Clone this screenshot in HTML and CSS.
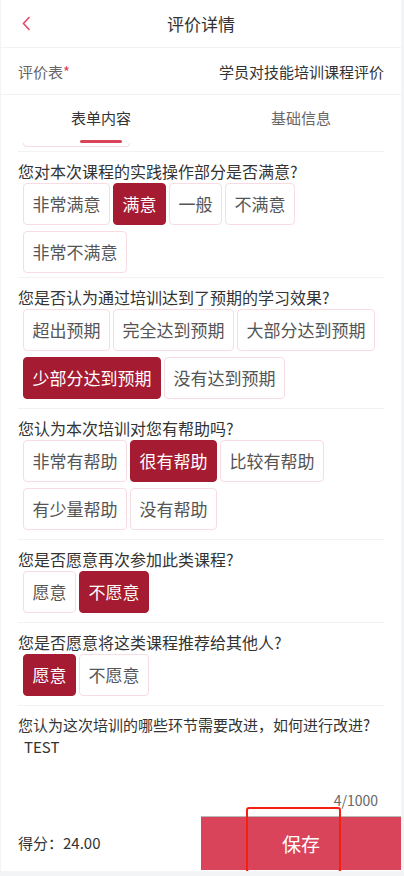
FILE: index.html
```html
<!DOCTYPE html>
<html lang="zh-CN">
<head>
    <meta charset="UTF-8">
    <meta name="viewport" content="width=device-width, initial-scale=1.0">
    <title>评价详情</title>
    <link rel="stylesheet" href="styles.css">
</head>
<body>
    <div class="app">
        <header class="nav">
            <span class="nav-back">
                <svg width="9" height="15" viewBox="0 0 9 15"><polyline points="7.5,1 1.5,7.5 7.5,14" fill="none" stroke="#e34968" stroke-width="1.6"/></svg>
            </span>
            <h1 class="nav-title">评价详情</h1>
            <span></span>
        </header>

        <div class="field-row">
            <span class="field-label">评价表<em>*</em></span>
            <span class="field-value">学员对技能培训课程评价</span>
        </div>

        <div class="tabs">
            <div class="tab active"><span>表单内容</span><i class="tab-bar"></i></div>
            <div class="tab"><span>基础信息</span></div>
        </div>

        <div class="form">
            <div class="peek"><div class="peek-btn"></div></div>

            <div class="question tight">
                <p class="q-title">您对本次课程的实践操作部分是否满意?</p>
                <div class="options">
                    <span class="opt">非常满意</span>
                    <span class="opt on">满意</span>
                    <span class="opt">一般</span>
                    <span class="opt">不满意</span>
                    <span class="opt">非常不满意</span>
                </div>
            </div>

            <div class="question">
                <p class="q-title">您是否认为通过培训达到了预期的学习效果?</p>
                <div class="options">
                    <span class="opt">超出预期</span>
                    <span class="opt">完全达到预期</span>
                    <span class="opt">大部分达到预期</span>
                    <span class="opt on">少部分达到预期</span>
                    <span class="opt">没有达到预期</span>
                </div>
            </div>

            <div class="question">
                <p class="q-title">您认为本次培训对您有帮助吗?</p>
                <div class="options">
                    <span class="opt">非常有帮助</span>
                    <span class="opt on">很有帮助</span>
                    <span class="opt">比较有帮助</span>
                    <span class="opt">有少量帮助</span>
                    <span class="opt">没有帮助</span>
                </div>
            </div>

            <div class="question">
                <p class="q-title">您是否愿意再次参加此类课程?</p>
                <div class="options">
                    <span class="opt">愿意</span>
                    <span class="opt on">不愿意</span>
                </div>
            </div>

            <div class="question">
                <p class="q-title">您是否愿意将这类课程推荐给其他人?</p>
                <div class="options">
                    <span class="opt on">愿意</span>
                    <span class="opt">不愿意</span>
                </div>
            </div>

            <div class="question text-q">
                <p class="q-title small">您认为这次培训的哪些环节需要改进，如何进行改进?</p>
                <div class="answer">TEST</div>
                <div class="counter">4/1000</div>
            </div>
        </div>

        <footer class="bar">
            <div class="score">得分：24.00</div>
            <button class="save">保存</button>
        </footer>

        <div class="mark"></div>
    </div>
</body>
</html>
```

FILE: styles.css
```css
body {
    margin: 0;
    background: #f3f4f6;
    font-family: "Noto Sans CJK SC", "Noto Sans", sans-serif;
    color: #333;
}
.app {
    position: relative;
    width: 400px;
    margin-left: 1px;
    background: #fff;
}
.nav {
    height: 47px;
    border-bottom: 1px solid #f2f2f2;
    display: grid;
    grid-template-columns: 1fr auto 1fr;
    align-items: center;
}
.nav-back {
    padding-left: 21px;
    display: flex;
    align-items: center;
}
.nav-title {
    margin: 0;
    font-size: 17px;
    font-weight: normal;
    line-height: 24px;
    color: #333;
}
.field-row {
    height: 46px;
    padding: 0 17px;
    border-bottom: 1px solid #f2f2f2;
    display: flex;
    align-items: center;
    justify-content: space-between;
    font-size: 15px;
}
.field-label {
    color: #666;
}
.field-label em {
    font-style: normal;
    color: #e0435a;
}
.field-value {
    color: #333;
}
.tabs {
    display: flex;
    height: 48px;
}
.tab {
    flex: 1;
    display: flex;
    flex-direction: column;
    align-items: center;
    padding-top: 12px;
    font-size: 15px;
    line-height: 22px;
    color: #666;
}
.tab.active {
    color: #333;
}
.tab-bar {
    width: 42px;
    height: 3px;
    margin-top: 11px;
    border-radius: 2px;
    background: #d9445a;
}
.form {
    padding: 0 17px;
}
.peek {
    height: 8px;
    border-bottom: 1px solid #f2f2f2;
}
.peek-btn {
    width: 105px;
    height: 3px;
    margin-left: 5px;
    border: 1px solid #f7dde3;
    border-top: none;
    border-radius: 0 0 4px 4px;
}
.question {
    padding: 8px 0 9px;
    border-bottom: 1px solid #f2f2f2;
}
.question.tight {
    padding-bottom: 4px;
}
.q-title {
    margin: 0;
    font-size: 16px;
    line-height: 22px;
    color: #333;
}
.q-title.small {
    font-size: 15px;
}
.options {
    display: flex;
    flex-wrap: wrap;
    gap: 6px 3px;
    margin-top: 1px;
    padding-left: 5px;
}
.opt {
    box-sizing: border-box;
    height: 42px;
    padding: 0 8.5px;
    border: 1px solid #f7dde3;
    border-radius: 4px;
    font-size: 17px;
    line-height: 40px;
    color: #555;
}
.opt.on {
    background: #a51b31;
    border-color: #a51b31;
    color: #fff;
}
.text-q {
    border-bottom: none;
    padding-bottom: 1px;
}
.answer {
    height: 54px;
    padding-left: 6px;
    font-size: 15px;
    line-height: 22px;
    color: #333;
}
.counter {
    padding-right: 6px;
    text-align: right;
    font-size: 14px;
    line-height: 20px;
    color: #666;
}
.bar {
    margin-top: 3px;
    height: 57px;
    display: flex;
    background: #fff;
}
.score {
    flex: 1;
    display: flex;
    align-items: center;
    padding-left: 17px;
    font-size: 15px;
    color: #333;
}
.save {
    width: 200px;
    margin: 2px 0 1px;
    border: none;
    border-top: 1px solid #b8b8b8;
    background: #d9445a;
    color: #fff;
    font-family: inherit;
    font-size: 19px;
}
.mark {
    position: absolute;
    left: 245px;
    top: 807px;
    width: 91px;
    height: 62px;
    border: 2px solid #f5200f;
    border-radius: 3px;
}
```
